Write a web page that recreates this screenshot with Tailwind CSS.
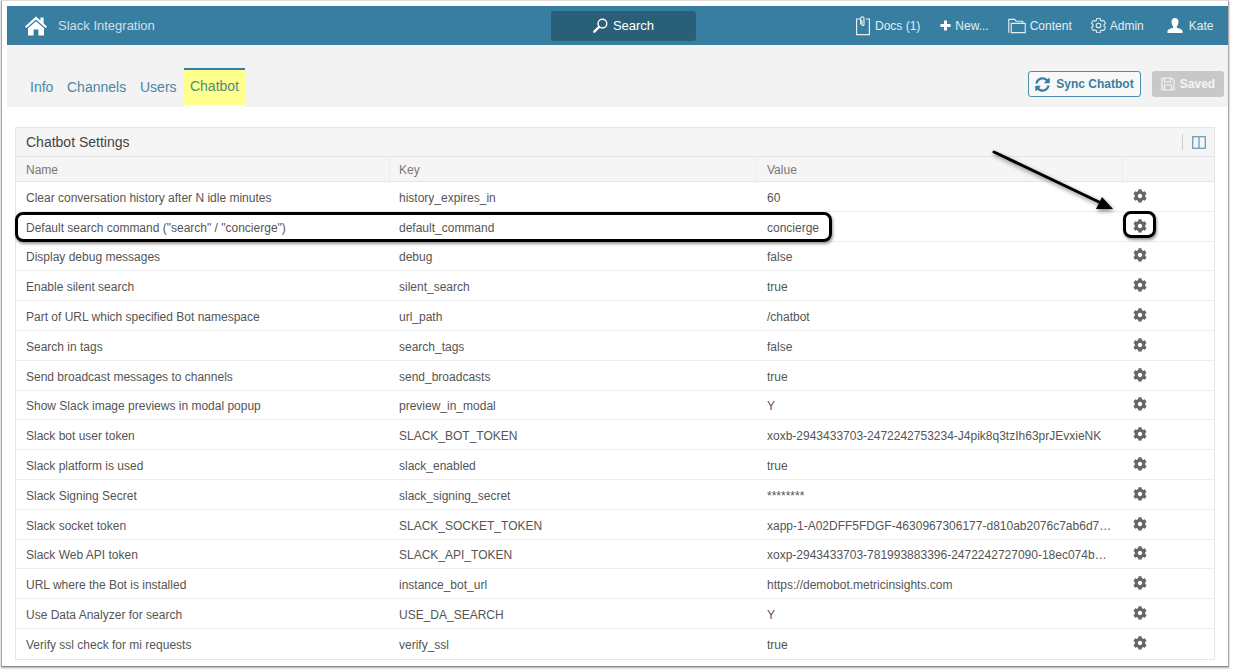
<!DOCTYPE html>
<html lang="en">

<head>
    <meta charset="UTF-8">
    <meta name="viewport" content="width=device-width, initial-scale=1.0">
    <title>Slack Integration - Chatbot</title>
    <script src="https://cdn.jsdelivr.net/npm/@tailwindcss/browser@4"></script>
</head>

<body class="bg-white w-[1235px] h-[670px] overflow-hidden font-['Liberation_Sans',Arial,sans-serif] text-[#555]">
    <svg class="hidden">
        <symbol id="cog" viewBox="0 0 512 512">
            <path fill="currentColor" d="M487.4 315.7l-42.6-24.6c4.3-23.2 4.3-47 0-70.2l42.6-24.6c4.9-2.8 7.1-8.6 5.5-14-11.1-35.6-30-67.8-54.7-94.6-3.8-4.1-10-5.1-14.8-2.3L380.8 110c-17.9-15.4-38.5-27.3-60.8-35.1V25.8c0-5.6-3.9-10.5-9.4-11.7-36.7-8.2-74.3-7.8-109.2 0-5.5 1.2-9.4 6.1-9.4 11.7V75c-22.2 7.9-42.8 19.8-60.8 35.1L88.7 85.5c-4.9-2.8-11-1.9-14.8 2.3-24.7 26.7-43.6 58.9-54.7 94.6-1.7 5.4.6 11.2 5.5 14L67.3 221c-4.3 23.2-4.3 47 0 70.2l-42.6 24.6c-4.9 2.8-7.1 8.6-5.5 14 11.1 35.6 30 67.8 54.7 94.6 3.8 4.1 10 5.1 14.8 2.3l42.6-24.6c17.9 15.4 38.5 27.3 60.8 35.1v49.2c0 5.6 3.9 10.5 9.4 11.7 36.7 8.2 74.3 7.8 109.2 0 5.5-1.2 9.4-6.1 9.4-11.7v-49.2c22.2-7.9 42.8-19.8 60.8-35.1l42.6 24.6c4.9 2.8 11 1.9 14.8-2.3 24.7-26.7 43.6-58.9 54.7-94.6 1.5-5.5-.7-11.3-5.6-14.1zM256 336c-44.1 0-80-35.9-80-80s35.9-80 80-80 80 35.9 80 80-35.9 80-80 80z" />
        </symbol>
    </svg>

    <!-- screenshot frame -->
    <div class="relative ml-px w-[1228px] h-[667px] pt-[5px] pl-[5px] border border-x-[#a8a8a8] border-b-[#888] border-t-[#ddd] shadow-[0_1px_2px_rgba(0,0,0,0.35)]">

        <!-- top nav -->
        <header class="h-[39px] bg-[#387ea1] flex items-center text-[12px] text-[#e3edf2] whitespace-nowrap">
            <svg class="ml-[18px] w-[22px] h-[20px] text-white" viewBox="0 0 22 20" fill="currentColor">
                <path d="M11 0.5 L15.5 4.6 V1.6 H18.6 V7.4 L22 10.5 L20.6 12 L11 3.6 L1.4 12 L0 10.5 Z" />
                <path d="M11 5.3 L19 12.2 V19.6 H13.4 V13.6 H8.6 V19.6 H3 V12.2 Z" />
            </svg>
            <span class="ml-[11px] w-[396px] text-[13px] text-[#cfe0e8]">Slack Integration</span>
            <div class="ml-[97px] w-[145px] h-[30px] bg-[#2a5f78] rounded-[3px] flex items-center justify-center gap-[5px] text-white text-[13px]">
                <svg class="w-[15px] h-[15px]" viewBox="0 0 15 15" fill="none" stroke="currentColor">
                    <circle cx="9.4" cy="5.6" r="4.4" stroke-width="1.4" />
                    <path d="M6 9 L1.3 13.7" stroke-width="2.4" stroke-linecap="round" />
                </svg>
                <span>Search</span>
            </div>
            <svg class="ml-[159px] w-[16px] h-[20px]" viewBox="0 0 16 20" fill="none" stroke="currentColor" stroke-width="1.2">
                <path d="M5 3 H1.6 V18.6 H14.4 V3 H11" />
                <path d="M5.6 8.6 V2.6 A1.7 1.7 0 0 1 9 2.6 V8.6 A1 1 0 0 1 7 8.6 V4" />
            </svg>
            <span class="ml-[4px]">Docs (1)</span>
            <svg class="ml-[20px] w-[11px] h-[11px] text-white" viewBox="0 0 12 12" fill="currentColor">
                <path d="M4.4 0.5 H7.6 V4.4 H11.5 V7.6 H7.6 V11.5 H4.4 V7.6 H0.5 V4.4 H4.4 Z" />
            </svg>
            <span class="ml-[4px]">New...</span>
            <svg class="ml-[19px] w-[18px] h-[16px]" viewBox="0 0 19 16" fill="none" stroke="currentColor" stroke-width="1.2">
                <path d="M0.8 15 V1 H7 L8.6 3 H15.5 V5" />
                <path d="M3.4 15 V5.2 H18.2 V15 Z" />
            </svg>
            <span class="ml-[4px]">Content</span>
            <svg class="ml-[19px] w-[15px] h-[15px]" viewBox="0 0 512 512" fill="none" stroke="currentColor" stroke-width="36">
                <path d="M487.4 315.7l-42.6-24.6c4.3-23.2 4.3-47 0-70.2l42.6-24.6c4.9-2.8 7.1-8.6 5.5-14-11.1-35.6-30-67.8-54.7-94.6-3.8-4.1-10-5.1-14.8-2.3L380.8 110c-17.9-15.4-38.5-27.3-60.8-35.1V25.8c0-5.6-3.9-10.5-9.4-11.7-36.7-8.2-74.3-7.8-109.2 0-5.5 1.2-9.4 6.1-9.4 11.7V75c-22.2 7.9-42.8 19.8-60.8 35.1L88.7 85.5c-4.9-2.8-11-1.9-14.8 2.3-24.7 26.7-43.6 58.9-54.7 94.6-1.7 5.4.6 11.2 5.5 14L67.3 221c-4.3 23.2-4.3 47 0 70.2l-42.6 24.6c-4.9 2.8-7.1 8.6-5.5 14 11.1 35.6 30 67.8 54.7 94.6 3.8 4.1 10 5.1 14.8 2.3l42.6-24.6c17.9 15.4 38.5 27.3 60.8 35.1v49.2c0 5.6 3.9 10.5 9.4 11.7 36.7 8.2 74.3 7.8 109.2 0 5.5-1.2 9.4-6.1 9.4-11.7v-49.2c22.2-7.9 42.8-19.8 60.8-35.1l42.6 24.6c4.9 2.8 11 1.9 14.8-2.3 24.7-26.7 43.6-58.9 54.7-94.6 1.5-5.5-.7-11.3-5.6-14.1z" />
                <circle cx="256" cy="256" r="80" />
            </svg>
            <span class="ml-[4px]">Admin</span>
            <svg class="ml-[23px] w-[16px] h-[17px] text-white" viewBox="0 0 17 17" fill="currentColor">
                <path d="M8.5 0.5 C11 0.5 12.3 2.4 12.2 5 C12.1 7 11.2 8.6 10.4 9.5 V10.8 C12.5 11.6 16 12.2 16.5 14 V16.5 H0.5 V14 C1 12.2 4.5 11.6 6.6 10.8 V9.5 C5.8 8.6 4.9 7 4.8 5 C4.7 2.4 6 0.5 8.5 0.5 Z" />
            </svg>
            <span class="ml-[6px]">Kate</span>
        </header>

        <!-- tab bar -->
        <div class="h-[62px] bg-[#f3f3f3] flex text-[14px] text-[#4a86a6]">
            <nav class="flex pl-[23px] pt-[23px]">
                <span class="w-[37px] leading-[38px]">Info</span>
                <span class="w-[73px] leading-[38px]">Channels</span>
                <span class="w-[44px] leading-[38px]">Users</span>
                <span class="w-[61px] h-[39px] border-t-2 border-[#387ea1] text-center leading-[32px] bg-[linear-gradient(#ffff8c_0,#ffff8c_35px,#fff_35px)] text-[#4f8c7d]">Chatbot</span>
            </nav>
            <div class="ml-auto mr-[4px] mt-[26px] flex items-start gap-[11px] text-[12px] font-bold">
                <button class="w-[113px] h-[26px] bg-white/40 border border-[#4a8fb0] rounded-[3px] flex items-center justify-center gap-[6px] text-[#387ea1]">
                    <svg class="w-[15px] h-[15px]" viewBox="0 0 512 512" fill="currentColor">
                        <path d="M370.7 133.3C339.5 104 298.9 88 255.8 88c-77.5.1-144.3 53.2-162.8 126.9-1.3 5.4-6.1 9.2-11.7 9.2H24.1c-7.5 0-13.2-6.8-11.8-14.2C33.9 94.9 134.8 8 256 8c66.4 0 126.8 26.1 171.3 68.7L463 41c15.1-15.1 41-4.4 41 17v134c0 13.3-10.7 24-24 24H346c-21.4 0-32.1-25.9-17-41l41.7-41.7zM32 296h134c21.4 0 32.1 25.9 17 41l-41.7 41.7c31.2 29.3 71.8 45.3 114.9 45.3 77.4-.1 144.2-53.1 162.7-126.8 1.3-5.4 6.1-9.2 11.7-9.2h57.3c7.5 0 13.2 6.8 11.8 14.2C478.1 417.1 377.2 504 256 504c-66.4 0-126.8-26.1-171.3-68.7L49 471c-15.1 15.1-41 4.4-41-17V320c0-13.3 10.7-24 24-24z" />
                    </svg>
                    <span>Sync Chatbot</span>
                </button>
                <button class="w-[72px] h-[26px] bg-[#c8c8c8] rounded-[3px] flex items-center justify-center gap-[5px] text-white/80">
                    <svg class="w-[14px] h-[14px]" viewBox="0 0 14 14" fill="none" stroke="currentColor" stroke-width="1.2">
                        <path d="M1 1 H10.5 L13 3.5 V13 H1 Z" />
                        <path d="M3.5 1 V5 H9.5 V1 M3.5 13 V8 H10.5 V13" />
                    </svg>
                    <span>Saved</span>
                </button>
            </div>
        </div>

        <!-- settings panel -->
        <section class="mt-[20px] ml-[8px] w-[1200px] border border-[#e6e6e6] text-[12px]">
            <div class="h-[29px] bg-[#f5f5f5] border-b border-[#e6e6e6] flex items-center pl-[10px] pr-[8px] text-[14px] text-[#444]">
                <span>Chatbot Settings</span>
                <span class="ml-auto h-[16px] border-l border-[#ccc] pl-[9px] flex items-center">
                    <svg class="w-[14px] h-[13px]" viewBox="0 0 14 13" fill="none" stroke="#6d9db5" stroke-width="1.3">
                        <rect x="0.7" y="0.7" width="12.6" height="11.6" />
                        <path d="M7 0.7 V12.3" />
                    </svg>
                </span>
            </div>
            <div class="grid grid-cols-[374px_367px_366px_1fr] h-[25px] bg-[#f5f5f5] border-b border-[#e6e6e6] text-[#777] leading-[26px]">
                <span class="pl-[10px] border-r border-[#eee]">Name</span>
                <span class="pl-[9px] border-r border-[#eee]">Key</span>
                <span class="pl-[10px] border-r border-[#eee]">Value</span>
                <span></span>
            </div>

            <div class="grid grid-cols-[374px_367px_366px_1fr] h-[29.8px] pt-[3px] items-center border-b border-[#eee]"><span class="pl-[10px]">Clear conversation history after N idle minutes</span><span class="pl-[9px]">history_expires_in</span><span class="pl-[10px]">60</span><svg class="w-[14px] h-[14px] ml-[10px] -mt-[4px] text-[#666]"><use href="#cog" /></svg></div>
            <div class="grid grid-cols-[374px_367px_366px_1fr] h-[29.8px] pt-[3px] items-center border-b border-[#eee]"><span class="pl-[10px]">Default search command ("search" / "concierge")</span><span class="pl-[9px]">default_command</span><span class="pl-[10px]">concierge</span><svg class="w-[14px] h-[14px] ml-[10px] -mt-[4px] text-[#666]"><use href="#cog" /></svg></div>
            <div class="grid grid-cols-[374px_367px_366px_1fr] h-[29.8px] pt-[3px] items-center border-b border-[#eee]"><span class="pl-[10px]">Display debug messages</span><span class="pl-[9px]">debug</span><span class="pl-[10px]">false</span><svg class="w-[14px] h-[14px] ml-[10px] -mt-[4px] text-[#666]"><use href="#cog" /></svg></div>
            <div class="grid grid-cols-[374px_367px_366px_1fr] h-[29.8px] pt-[3px] items-center border-b border-[#eee]"><span class="pl-[10px]">Enable silent search</span><span class="pl-[9px]">silent_search</span><span class="pl-[10px]">true</span><svg class="w-[14px] h-[14px] ml-[10px] -mt-[4px] text-[#666]"><use href="#cog" /></svg></div>
            <div class="grid grid-cols-[374px_367px_366px_1fr] h-[29.8px] pt-[3px] items-center border-b border-[#eee]"><span class="pl-[10px]">Part of URL which specified Bot namespace</span><span class="pl-[9px]">url_path</span><span class="pl-[10px]">/chatbot</span><svg class="w-[14px] h-[14px] ml-[10px] -mt-[4px] text-[#666]"><use href="#cog" /></svg></div>
            <div class="grid grid-cols-[374px_367px_366px_1fr] h-[29.8px] pt-[3px] items-center border-b border-[#eee]"><span class="pl-[10px]">Search in tags</span><span class="pl-[9px]">search_tags</span><span class="pl-[10px]">false</span><svg class="w-[14px] h-[14px] ml-[10px] -mt-[4px] text-[#666]"><use href="#cog" /></svg></div>
            <div class="grid grid-cols-[374px_367px_366px_1fr] h-[29.8px] pt-[3px] items-center border-b border-[#eee]"><span class="pl-[10px]">Send broadcast messages to channels</span><span class="pl-[9px]">send_broadcasts</span><span class="pl-[10px]">true</span><svg class="w-[14px] h-[14px] ml-[10px] -mt-[4px] text-[#666]"><use href="#cog" /></svg></div>
            <div class="grid grid-cols-[374px_367px_366px_1fr] h-[29.8px] pt-[3px] items-center border-b border-[#eee]"><span class="pl-[10px]">Show Slack image previews in modal popup</span><span class="pl-[9px]">preview_in_modal</span><span class="pl-[10px]">Y</span><svg class="w-[14px] h-[14px] ml-[10px] -mt-[4px] text-[#666]"><use href="#cog" /></svg></div>
            <div class="grid grid-cols-[374px_367px_366px_1fr] h-[29.8px] pt-[3px] items-center border-b border-[#eee]"><span class="pl-[10px]">Slack bot user token</span><span class="pl-[9px]">SLACK_BOT_TOKEN</span><span class="pl-[10px] whitespace-nowrap">xoxb-2943433703-2472242753234-J4pik8q3tzIh63prJEvxieNK</span><svg class="w-[14px] h-[14px] ml-[10px] -mt-[4px] text-[#666]"><use href="#cog" /></svg></div>
            <div class="grid grid-cols-[374px_367px_366px_1fr] h-[29.8px] pt-[3px] items-center border-b border-[#eee]"><span class="pl-[10px]">Slack platform is used</span><span class="pl-[9px]">slack_enabled</span><span class="pl-[10px]">true</span><svg class="w-[14px] h-[14px] ml-[10px] -mt-[4px] text-[#666]"><use href="#cog" /></svg></div>
            <div class="grid grid-cols-[374px_367px_366px_1fr] h-[29.8px] pt-[3px] items-center border-b border-[#eee]"><span class="pl-[10px]">Slack Signing Secret</span><span class="pl-[9px]">slack_signing_secret</span><span class="pl-[10px]">********</span><svg class="w-[14px] h-[14px] ml-[10px] -mt-[4px] text-[#666]"><use href="#cog" /></svg></div>
            <div class="grid grid-cols-[374px_367px_366px_1fr] h-[29.8px] pt-[3px] items-center border-b border-[#eee]"><span class="pl-[10px]">Slack socket token</span><span class="pl-[9px]">SLACK_SOCKET_TOKEN</span><span class="pl-[10px] whitespace-nowrap">xapp-1-A02DFF5FDGF-4630967306177-d810ab2076c7ab6d7…</span><svg class="w-[14px] h-[14px] ml-[10px] -mt-[4px] text-[#666]"><use href="#cog" /></svg></div>
            <div class="grid grid-cols-[374px_367px_366px_1fr] h-[29.8px] pt-[3px] items-center border-b border-[#eee]"><span class="pl-[10px]">Slack Web API token</span><span class="pl-[9px]">SLACK_API_TOKEN</span><span class="pl-[10px] whitespace-nowrap">xoxp-2943433703-781993883396-2472242727090-18ec074b…</span><svg class="w-[14px] h-[14px] ml-[10px] -mt-[4px] text-[#666]"><use href="#cog" /></svg></div>
            <div class="grid grid-cols-[374px_367px_366px_1fr] h-[29.8px] pt-[3px] items-center border-b border-[#eee]"><span class="pl-[10px]">URL where the Bot is installed</span><span class="pl-[9px]">instance_bot_url</span><span class="pl-[10px]">https://demobot.metricinsights.com</span><svg class="w-[14px] h-[14px] ml-[10px] -mt-[4px] text-[#666]"><use href="#cog" /></svg></div>
            <div class="grid grid-cols-[374px_367px_366px_1fr] h-[29.8px] pt-[3px] items-center border-b border-[#eee]"><span class="pl-[10px]">Use Data Analyzer for search</span><span class="pl-[9px]">USE_DA_SEARCH</span><span class="pl-[10px]">Y</span><svg class="w-[14px] h-[14px] ml-[10px] -mt-[4px] text-[#666]"><use href="#cog" /></svg></div>
            <div class="grid grid-cols-[374px_367px_366px_1fr] h-[29.8px] pt-[3px] items-center"><span class="pl-[10px]">Verify ssl check for mi requests</span><span class="pl-[9px]">verify_ssl</span><span class="pl-[10px]">true</span><svg class="w-[14px] h-[14px] ml-[10px] -mt-[4px] text-[#666]"><use href="#cog" /></svg></div>
        </section>

        <!-- annotations on top of the screenshot -->
        <div class="absolute left-[13px] top-[211px] w-[817px] h-[30px] border-[3px] border-black rounded-[8px] shadow-[1px_2px_3px_rgba(0,0,0,0.4)]"></div>
        <div class="absolute left-[1121px] top-[210px] w-[33px] h-[27px] border-[3px] border-black rounded-[8px] shadow-[1px_2px_3px_rgba(0,0,0,0.4)]"></div>
        <svg class="absolute left-[985px] top-[145px] w-[135px] h-[70px] drop-shadow-[1px_2px_2px_rgba(0,0,0,0.5)]" viewBox="0 0 135 70">
            <path d="M7 6 L112 56" stroke="#000" stroke-width="3" stroke-linecap="round" />
            <path d="M126 63 L109 63 L115 51 Z" fill="#000" />
        </svg>
    </div>
</body>

</html>
